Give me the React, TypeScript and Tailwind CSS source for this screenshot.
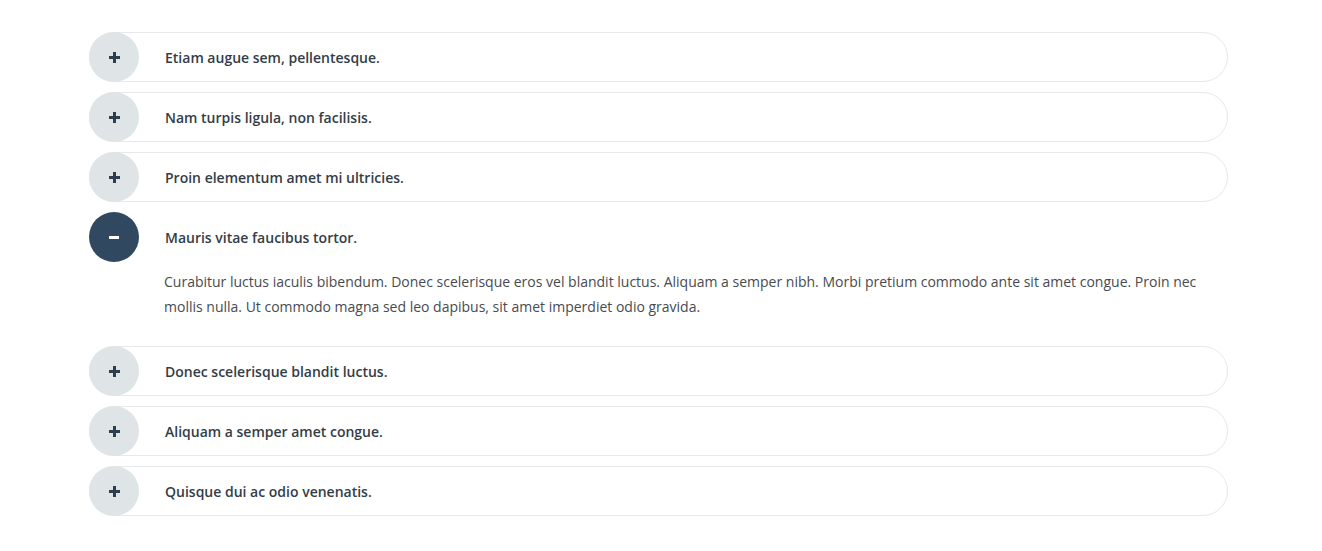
import { useState } from "react";

const items = [
  "Etiam augue sem, pellentesque.",
  "Nam turpis ligula, non facilisis.",
  "Proin elementum amet mi ultricies.",
  "Mauris vitae faucibus tortor.",
  "Donec scelerisque blandit luctus.",
  "Aliquam a semper amet congue.",
  "Quisque dui ac odio venenatis.",
];

const body =
  "Curabitur luctus iaculis bibendum. Donec scelerisque eros vel blandit luctus. Aliquam a semper nibh. Morbi pretium commodo ante sit amet congue. Proin nec mollis nulla. Ut commodo magna sed leo dapibus, sit amet imperdiet odio gravida.";

export default function App() {
  const [open, setOpen] = useState(3);

  return (
    <div className="min-h-[551px] bg-white pt-8 font-['Open_Sans',sans-serif]">
      <div className="ml-[89px] flex w-[1139px] flex-col gap-[10px]">
        {items.map((title, i) => {
          const isOpen = open === i;
          return (
            <div
              key={title}
              className={
                isOpen
                  ? "rounded-[25px] border border-transparent"
                  : "rounded-[25px] border border-[#e6e8e9]"
              }
            >
              <button
                onClick={() => setOpen(isOpen ? -1 : i)}
                className="-m-px flex h-[50px] w-full items-center text-left"
              >
                <span
                  className={
                    isOpen
                      ? "flex h-[50px] w-[50px] shrink-0 items-center justify-center rounded-full bg-[#304860]"
                      : "flex h-[50px] w-[50px] shrink-0 items-center justify-center rounded-full bg-[#dfe5e6]"
                  }
                >
                  {isOpen ? (
                    <span className="block h-[3px] w-[10px] bg-white" />
                  ) : (
                    <svg width="11" height="11" viewBox="0 0 11 11">
                      <rect x="4" y="0" width="3" height="11" fill="#2c3e50" />
                      <rect x="0" y="4" width="11" height="3" fill="#2c3e50" />
                    </svg>
                  )}
                </span>
                <span className="ml-[26px] text-[14px] font-semibold text-[#333d47]">
                  {title}
                </span>
              </button>
              {isOpen && (
                <div className="pb-[16px] pl-[74px] pr-[28px] pt-[8px] text-[14px] leading-[25px] text-[#474b50]">
                  {body}
                </div>
              )}
            </div>
          );
        })}
      </div>
    </div>
  );
}
